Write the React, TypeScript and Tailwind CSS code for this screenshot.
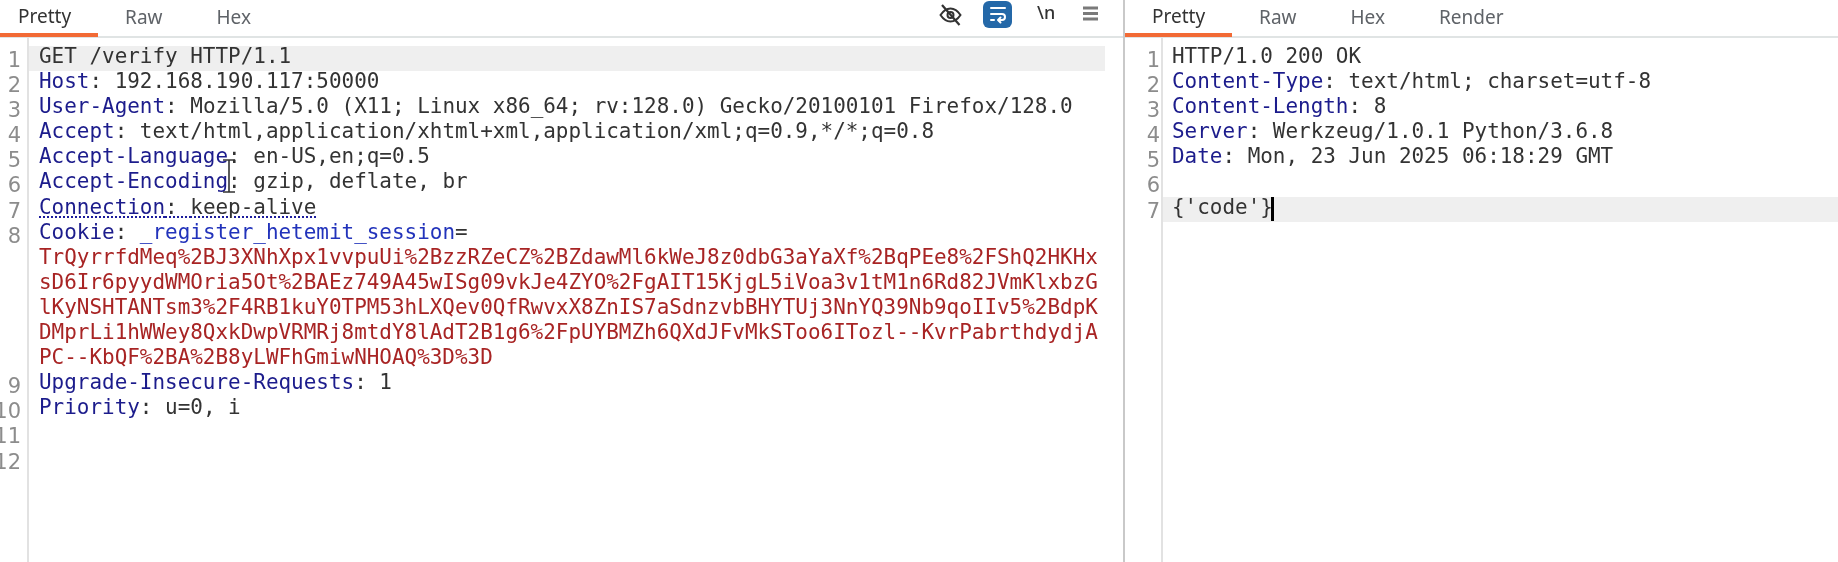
const COOKIE_LINES = [
  "TrQyrrfdMeq%2BJ3XNhXpx1vvpuUi%2BzzRZeCZ%2BZdawMl6kWeJ8z0dbG3aYaXf%2BqPEe8%2FShQ2HKHx",
  "sD6Ir6pyydWMOria5Ot%2BAEz749A45wISg09vkJe4ZYO%2FgAIT15KjgL5iVoa3v1tM1n6Rd82JVmKlxbzG",
  "lKyNSHTANTsm3%2F4RB1kuY0TPM53hLXQev0QfRwvxX8ZnIS7aSdnzvbBHYTUj3NnYQ39Nb9qoIIv5%2BdpK",
  "DMprLi1hWWey8QxkDwpVRMRj8mtdY8lAdT2B1g6%2FpUYBMZh6QXdJFvMkSToo6ITozl--KvrPabrthdydjA",
  "PC--KbQF%2BA%2B8yLWFhGmiwNHOAQ%3D%3D",
];

function Tabs({ items, className }: { items: string[]; className?: string }) {
  return (
    <div className={`flex h-[36px] items-center ${className ?? ""}`}>
      {items.map((item, i) => (
        <div key={item} className={i === 0 ? "flex h-[38px] items-center border-b-[4px] border-[#f26a35] px-[27px] pt-[1px]" : "flex h-[38px] items-center px-[27px] pb-[3px] pt-[1px] text-[#5f6368]"}>
          {item}
        </div>
      ))}
    </div>
  );
}

function Header({ name, value, dotted }: { name: string; value: string; dotted?: boolean }) {
  return (
    <span className={dotted ? "underline decoration-dotted decoration-[#1c1c9c] decoration-2 underline-offset-[3px]" : ""}>
      <span className="text-[#1c1c8c]">{name}</span>
      <span>: {value}</span>
    </span>
  );
}

function Row({ n, children, active, right }: { n?: number; children?: React.ReactNode; active?: boolean; right?: boolean }) {
  return (
    <div className="flex h-[25.1px]">
      <div className={`shrink-0 border-r-2 border-[#e2e2e2] ${right ? "w-[38px]" : "w-[29px]"}`}>
        {n ? (
          <div className={`flex h-[25px] items-start justify-end pt-[2px] font-['DejaVu_Sans',sans-serif] text-[21px] leading-[25px] text-[#8c8c8c] ${right ? "w-[35px]" : "w-[21px]"}`}>{n}</div>
        ) : null}
      </div>
      <div className={`relative min-w-0 flex-1 whitespace-pre leading-[21px] ${right ? "pl-[9px]" : "pl-[10px]"} ${active ? "bg-[#efefef]" : ""}`}>{children}</div>
    </div>
  );
}

export default function App() {
  return (
    <div className="flex h-[562px] w-[1838px] overflow-hidden bg-white font-['Noto_Sans',sans-serif] text-[#333333] blur-[0.35px]">
      {/* request pane */}
      <div className="flex h-full w-[1125px] shrink-0 flex-col border-r-2 border-[#c9c9c9]">
        <div className="flex h-[38px] shrink-0 items-start justify-between border-b-2 border-[#e0e4e4] pr-[25px] text-[19px]">
          <Tabs items={["Pretty", "Raw", "Hex"]} className="-ml-[9px]" />
          <div className="flex h-[28px] items-center">
            <svg width="23" height="22" viewBox="0 0 23 22" fill="none" stroke="#333333" strokeWidth="2" className="mt-[1px]">
              <path d="M1.5 11C4.5 6.5 8 4.5 11.5 4.5S18.5 6.5 21.5 11C18.5 15.5 15 17.5 11.5 17.5S4.5 15.5 1.5 11Z" />
              <circle cx="11.5" cy="11" r="3" />
              <path d="M3 1l17.5 20" strokeWidth="2.2" />
            </svg>
            <div className="ml-[21px] flex h-[27px] w-[29px] items-center justify-center rounded-[6px] bg-[#2468a8]">
              <svg width="20" height="20" viewBox="0 0 20 20" fill="none" stroke="white" strokeWidth="2" strokeLinecap="round" strokeLinejoin="round">
                <path d="M3 4h14" />
                <path d="M3 10h11a3 3 0 0 1 0 6h-3" />
                <path d="M12.5 13.5 10 16l2.5 2.5" />
                <path d="M3 16h3" />
              </svg>
            </div>
            <span className="ml-[25px] w-[15px] -translate-y-[2px] text-[18px] font-medium leading-none text-[#333333]">\n</span>
            <svg className="ml-[31px]" width="15" height="16" viewBox="0 0 15 16" fill="#7a7a7a">
              <rect x="0" y="0.5" width="15" height="3" />
              <rect x="0" y="6" width="15" height="3" />
              <rect x="0" y="11.5" width="15" height="3" />
            </svg>
          </div>
        </div>
        <div className="relative flex-1 overflow-hidden font-['DejaVu_Sans_Mono',monospace] text-[20.95px] leading-[25px]">
          <div className="h-[8px] w-[29px] border-r-2 border-[#e2e2e2]" />
          <div className="mr-[18px]">
            <Row n={1} active>GET /verify HTTP/1.1</Row>
            <Row n={2}><Header name="Host" value="192.168.190.117:50000" /></Row>
            <Row n={3}><Header name="User-Agent" value="Mozilla/5.0 (X11; Linux x86_64; rv:128.0) Gecko/20100101 Firefox/128.0" /></Row>
            <Row n={4}><Header name="Accept" value="text/html,application/xhtml+xml,application/xml;q=0.9,*/*;q=0.8" /></Row>
            <Row n={5}><Header name="Accept-Language" value="en-US,en;q=0.5" /></Row>
            <Row n={6}><Header name="Accept-Encoding" value="gzip, deflate, br" /></Row>
            <Row n={7}><Header name="Connection" value="keep-alive" dotted /></Row>
            <Row n={8}><span className="text-[#1c1c8c]">Cookie</span>: <span className="text-[#2233bb]">_register_hetemit_session</span>=</Row>
            {COOKIE_LINES.map((line) => (
              <Row key={line}><span className="text-[#a82424]">{line}</span></Row>
            ))}
            <Row n={9}><Header name="Upgrade-Insecure-Requests" value="1" /></Row>
            <Row n={10}><Header name="Priority" value="u=0, i" /></Row>
            <Row n={11} />
            <Row n={12} />
            <Row />
            <Row />
            <Row />
            <Row />
          </div>
          {/* mouse pointer */}
          <svg className="absolute left-[221px] top-[120px]" width="16" height="36" viewBox="0 0 16 36" fill="none" stroke="#333333" strokeWidth="1.6">
            <path d="M2 2h12M8 2v32M2 34h12" />
          </svg>
        </div>
      </div>

      {/* response pane */}
      <div className="flex h-full min-w-0 flex-1 flex-col">
        <div className="h-[38px] shrink-0 border-b-2 border-[#e0e4e4] text-[19px]">
          <Tabs items={["Pretty", "Raw", "Hex", "Render"]} />
        </div>
        <div className="flex-1 overflow-hidden font-['DejaVu_Sans_Mono',monospace] text-[20.95px] leading-[25px]">
          <div className="h-[8px] w-[38px] border-r-2 border-[#e2e2e2]" />
          <Row right n={1}>HTTP/1.0 200 OK</Row>
          <Row right n={2}><Header name="Content-Type" value="text/html; charset=utf-8" /></Row>
          <Row right n={3}><Header name="Content-Length" value="8" /></Row>
          <Row right n={4}><Header name="Server" value="Werkzeug/1.0.1 Python/3.6.8" /></Row>
          <Row right n={5}><Header name="Date" value="Mon, 23 Jun 2025 06:18:29 GMT" /></Row>
          <Row right n={6} />
          <Row right n={7} active>
            {"{'code'}"}
            <span className="absolute left-[108px] top-0 h-[24px] w-[3px] bg-black" />
          </Row>
          {Array.from({ length: 14 }, (_, i) => <Row right key={i} />)}
        </div>
      </div>
    </div>
  );
}
